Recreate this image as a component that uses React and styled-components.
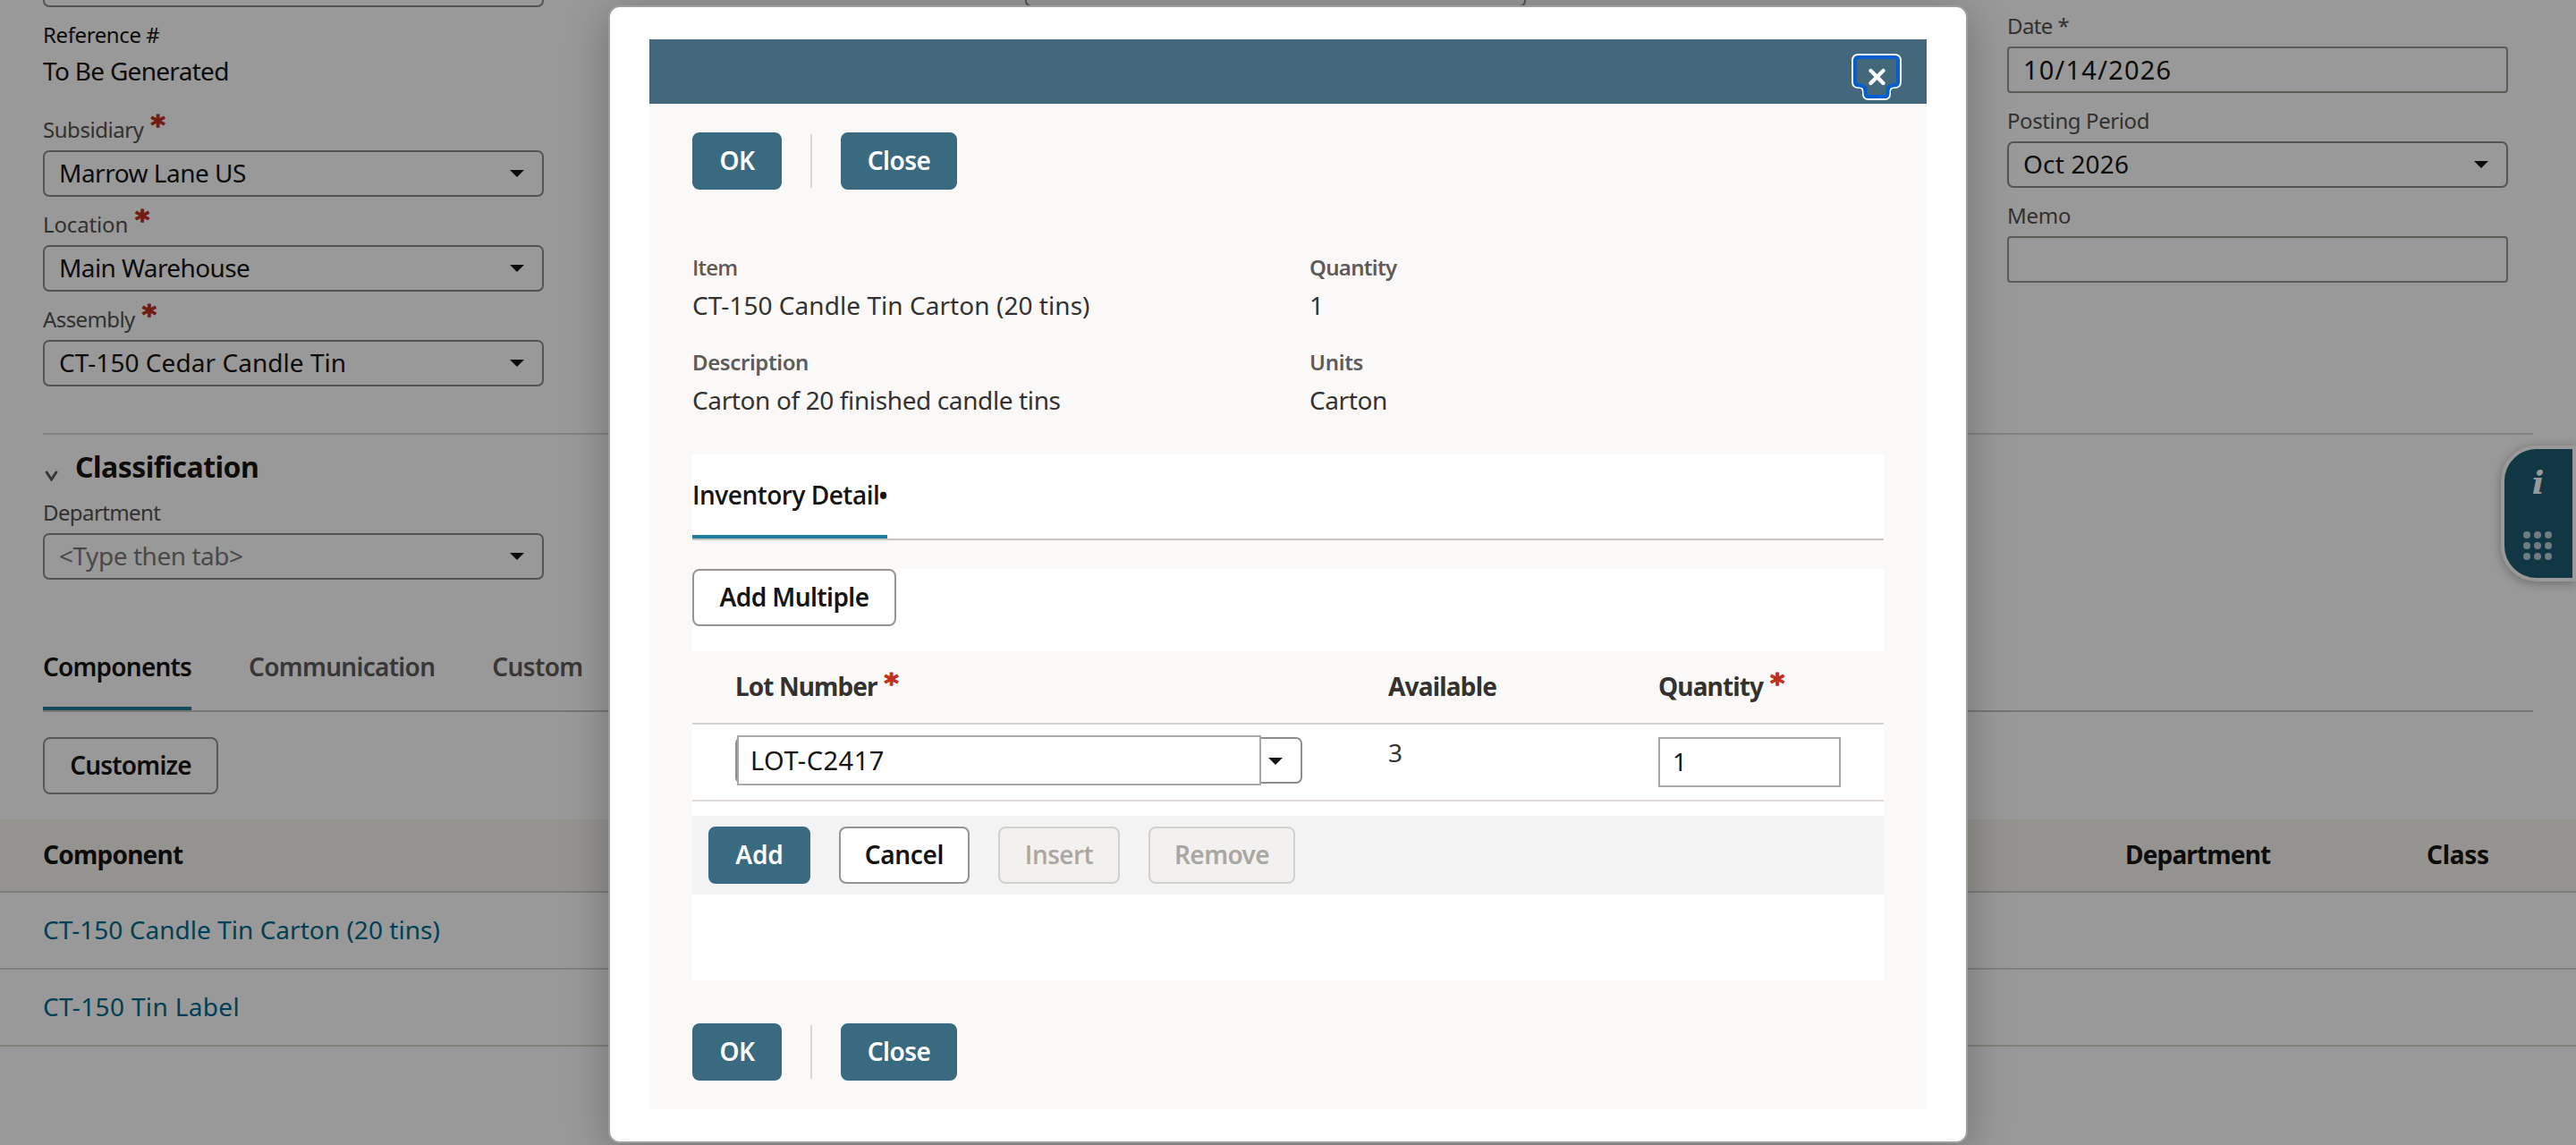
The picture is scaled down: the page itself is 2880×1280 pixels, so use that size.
import React from 'react';
import styled, { createGlobalStyle, css } from 'styled-components';

const GlobalStyle = createGlobalStyle`
  * { box-sizing: border-box; }
  html, body { margin: 0; padding: 0; background: #fff; }
  body {
    font-family: 'Noto Sans', 'Open Sans', sans-serif;
    font-size: 28px;
    color: #161513;
    overflow: hidden;
  }
  button { font-family: inherit; margin: 0; }
`;

/* ---------- shared text ---------- */

const Txt = styled.span`
  letter-spacing: ${(p) => p.$ls ?? 0}px;
  white-space: pre;
  ${(p) => p.$size && css`font-size: ${p.$size}px;`}
  ${(p) => p.$open && css`font-family: 'Open Sans', sans-serif;`}
`;

const Star = styled.span`
  font: 700 31px/32px 'DejaVu Sans', sans-serif;
  color: #c0301f;
  -webkit-text-stroke: 1.2px #c0301f;
  align-self: flex-start;
  margin: ${(p) => p.$top ?? 9}px 0 0 8px;
`;

/* ---------- page ---------- */

const Screen = styled.div`
  position: relative;
  width: 2880px;
  height: 1280px;
  overflow: hidden;
  background: #fff;
`;

const FormGrid = styled.section`
  display: grid;
  grid-template-columns: repeat(3, 560px);
  column-gap: 538px;
  height: 484px;
  padding-left: 48px;
  align-items: start;
`;

const FormColumn = styled.div`
  display: flex;
  flex-direction: column;
  margin-top: ${(p) => p.$top}px;
`;

const Label = styled.div`
  display: flex;
  align-items: flex-end;
  height: 54px;
  padding-bottom: 6px;
  font-size: 24px;
  line-height: 34px;
  color: #55534e;
`;

const StaticLabel = styled.div`
  margin-top: 14px;
  font-size: 24px;
  line-height: 34px;
`;

const StaticValue = styled.div`
  margin: 4px 0 16px;
  line-height: 38px;
`;

const Control = styled.div`
  display: flex;
  align-items: center;
  justify-content: space-between;
  height: 52px;
  padding: 0 20px 2px 16px;
  border: 2px solid ${(p) => (p.$input ? '#99988f' : '#8d8d8d')};
  border-radius: ${(p) => (p.$input ? 4 : 7)}px;
  color: ${(p) => (p.$muted ? '#7b7b7b' : '#161513')};
`;

const CaretIcon = styled.svg`
  width: 16px;
  height: 8px;
  flex: none;
  margin-top: 2px;
`;

const Caret = () => (
  <CaretIcon viewBox="0 0 16 8">
    <path d="M0 0h16L8 8z" fill="#161513" />
  </CaretIcon>
);

const Classification = styled.section`
  width: 2784px;
  margin-left: 48px;
  padding-top: 14px;
  border-top: 2px solid #dfd6d0;
`;

const SectionTitle = styled.h2`
  display: flex;
  align-items: center;
  gap: 19px;
  height: 42px;
  margin: 0;
  padding: 2px 0 0 2px;
  font-size: 32px;
  line-height: 42px;
  font-weight: 700;
`;

const Chevron = styled.svg`
  width: 15px;
  height: 12px;
  margin-top: 20px;
`;

const DepartmentField = styled.div`
  width: 560px;
`;

const TabBar = styled.nav`
  display: flex;
  gap: 64px;
  width: ${(p) => p.$w}px;
  margin: ${(p) => p.$m};
  border-bottom: 2px solid #c8c5bf;
`;

const Tab = styled.div`
  display: flex;
  align-items: center;
  height: ${(p) => p.$h}px;
  padding-top: ${(p) => p.$pt ?? 0}px;
  border-bottom: 4px solid ${(p) => (p.$active ? '#227e9e' : 'transparent')};
  font-weight: 600;
  color: ${(p) => (p.$active ? '#161513' : '#5f5d5a')};
`;

const Toolbar = styled.div`
  margin: 28px 0 28px 48px;
`;

const variants = {
  primary: css`background: #3a6a80; border-color: #3a6a80; color: #fff;`,
  plain: css`background: #fff; border-color: #97938e; color: #161513;`,
  disabled: css`background: #f3f1f0; border-color: #d4d0cb; color: #a9a7a1;`,
};

const Button = styled.button`
  display: flex;
  align-items: center;
  justify-content: center;
  width: ${(p) => p.$w}px;
  height: 64px;
  padding: 0 0 2px;
  border: 2px solid;
  border-radius: 8px;
  font-size: 28px;
  font-weight: 600;
  ${(p) => variants[p.$variant ?? 'plain']}
`;

const ComponentTable = styled.div`
  display: flex;
  flex-direction: column;
`;

const Row = styled.div`
  display: grid;
  grid-template-columns: 2328px 337px 1fr;
  align-items: center;
  height: ${(p) => (p.$head ? 82 : 86)}px;
  padding: 0 0 2px 48px;
  border-bottom: 2px solid ${(p) => (p.$head ? '#cfcdc6' : '#d5d4ca')};
  background: ${(p) => (p.$head ? '#f9f6f1' : 'transparent')};
  font-weight: ${(p) => (p.$head ? 700 : 400)};
  color: ${(p) => (p.$head ? '#161513' : '#006c90')};
`;

/* ---------- side dock ---------- */

const Dock = styled.aside`
  position: absolute;
  top: 498px;
  right: 0;
  display: flex;
  flex-direction: column;
  align-items: center;
  width: 84px;
  height: 152px;
  padding-top: 18px;
  border: 4px solid #fff;
  border-radius: 40px 0 0 40px;
  background: #1b5d71;
  box-shadow: 0 2px 12px rgba(0, 0, 0, 0.3);
`;

const InfoGlyph = styled.span`
  height: 38px;
  margin-left: -1px;
  font: italic 700 36px/38px 'DejaVu Serif', serif;
  color: #fff;
`;

const DotGrid = styled.div`
  display: grid;
  grid-template-columns: repeat(3, 8px);
  gap: 4px;
  margin: 36px 2px 0 0;
`;

const Dot = styled.i`
  height: 8px;
  border-radius: 50%;
  background: #bbced4;
`;

/* ---------- modal ---------- */

const Overlay = styled.div`
  position: absolute;
  inset: 0;
  display: flex;
  justify-content: center;
  align-items: flex-start;
  padding-top: 6px;
  background: rgba(0, 0, 0, 0.4);
`;

const Dialog = styled.div`
  width: 1520px;
  height: 1272px;
  padding: 36px 44px;
  border: 2px solid #9e9e9e;
  border-radius: 13px;
  background: #fff;
  box-shadow: 0 8px 48px rgba(0, 0, 0, 0.27);
`;

const TitleBar = styled.header`
  display: flex;
  justify-content: flex-end;
  height: 72px;
  padding: 16px 28px 0 0;
  background: #43687b;
`;

const CloseIcon = styled.svg`
  width: 56px;
  height: 52px;
`;

const Body = styled.div`
  display: flex;
  flex-direction: column;
  height: 1124px;
  padding: 32px 48px;
  background: #faf9f7;
`;

const Actions = styled.div`
  display: flex;
  align-items: center;
  gap: 32px;
`;

const Divider = styled.i`
  width: 2px;
  height: 60px;
  background: #d8d7d3;
`;

const Facts = styled.dl`
  display: grid;
  grid-template-columns: 690px 1fr;
  row-gap: 28px;
  margin: 70px 0 42px;
`;

const Fact = styled.div`
  min-width: 0;
`;

const Term = styled.dt`
  font-size: 24px;
  font-weight: 600;
  line-height: 34px;
  color: #5e5c5a;
`;

const Desc = styled.dd`
  margin: 6px 0 0;
  line-height: 38px;
  color: #333231;
`;

const TabPanelHead = styled.div`
  height: 96px;
  background: #fff;
`;

const Bullet = styled.span`
  width: 10px;
  margin-left: -1px;
`;

const Panel = styled.div`
  height: 460px;
  margin: 32px 0 48px;
  background: #fff;
`;

const LotGrid = styled.div`
  display: grid;
  grid-template-columns: 730px 302px 1fr;
  padding-left: 48px;
`;

const LotHead = styled(LotGrid)`
  height: 82px;
  margin-top: 28px;
  background: #fbfaf8;
  border-bottom: 2px solid #d6d4d0;
  font-weight: 700;
  color: #333231;
`;

const HeadCell = styled.div`
  display: flex;
  line-height: 78px;
`;

const LotRow = styled(LotGrid)`
  height: 86px;
  border-bottom: 2px solid #dfdad6;
  align-items: start;
`;

const Combo = styled.div`
  display: flex;
  width: 634px;
  height: 52px;
  margin-top: 14px;
  border: 2px solid #8d8d8d;
  border-radius: 7px;
`;

const ComboInput = styled.div`
  display: flex;
  align-items: center;
  width: 586px;
  height: 56px;
  margin-top: -4px;
  padding: 0 0 2px 13px;
  border: 2px solid #a9a9a9;
  background: #fff;
`;

const ComboArrow = styled.div`
  display: flex;
  align-items: center;
  padding-left: 8px;
`;

const Available = styled.div`
  margin-top: 12px;
  line-height: 38px;
  color: #333231;
`;

const QtyInput = styled.div`
  display: flex;
  align-items: center;
  width: 204px;
  height: 56px;
  margin-top: 14px;
  padding: 0 0 2px 14px;
  border: 2px solid #a9a9a9;
`;

const RowActions = styled.div`
  display: flex;
  gap: 32px;
  margin-top: 16px;
  padding: 12px 18px;
  background: #f3f3f3;
`;

/* ---------- pieces ---------- */

function Field({ label, ls, required, children }) {
  return (
    <>
      <Label>
        <Txt $ls={ls}>{label}</Txt>
        {required && <Star>*</Star>}
      </Label>
      {children}
    </>
  );
}

function Select({ value, ls, muted }) {
  return (
    <Control $muted={muted}>
      <Txt $ls={ls}>{value}</Txt>
      <Caret />
    </Control>
  );
}

function FormActions() {
  return (
    <Actions>
      <Button $variant="primary" $w={100}><Txt $ls={-0.6}>OK</Txt></Button>
      <Divider />
      <Button $variant="primary" $w={130}><Txt $ls={-0.5}>Close</Txt></Button>
    </Actions>
  );
}

export default function App() {
  return (
    <Screen>
      <GlobalStyle />
      <FormGrid>
        <FormColumn $top={-44}>
          <Control />
          <StaticLabel><Txt $ls={-0.4}>Reference #</Txt></StaticLabel>
          <StaticValue><Txt $ls={-0.7}>To Be Generated</Txt></StaticValue>
          <Field label="Subsidiary" ls={-0.45} required>
            <Select value="Marrow Lane US" ls={-0.5} />
          </Field>
          <Field label="Location" ls={-0.15} required>
            <Select value="Main Warehouse" ls={-0.6} />
          </Field>
          <Field label="Assembly" ls={-0.6} required>
            <Select value="CT-150 Cedar Candle Tin" ls={0.05} />
          </Field>
        </FormColumn>
        <FormColumn $top={-44}>
          <Control />
        </FormColumn>
        <FormColumn $top={-2}>
          <Field label="Date *" ls={-0.6}>
            <Control $input><Txt $size={29} $ls={1.2}>10/14/2026</Txt></Control>
          </Field>
          <Field label="Posting Period" ls={-0.4}>
            <Select value="Oct 2026" ls={0.18} />
          </Field>
          <Field label="Memo" ls={-0.25}>
            <Control $input />
          </Field>
        </FormColumn>
      </FormGrid>

      <Classification>
        <SectionTitle>
          <Chevron viewBox="0 0 15 12">
            <path d="M1.5 1l6 9 6-9" fill="none" stroke="#5c5b59" strokeWidth="3" />
          </Chevron>
          <Txt $ls={-0.54}>Classification</Txt>
        </SectionTitle>
        <DepartmentField>
          <Field label="Department" ls={-0.6}>
            <Select value="<Type then tab>" ls={-0.45} muted />
          </Field>
        </DepartmentField>
      </Classification>

      <TabBar $w={2784} $m="48px 0 0 48px">
        <Tab $h={98} $pt={4} $active><Txt $ls={-0.8}>Components</Txt></Tab>
        <Tab $h={98} $pt={4}><Txt $ls={-0.71}>Communication</Txt></Tab>
        <Tab $h={98} $pt={4}><Txt $ls={-0.64}>Custom</Txt></Tab>
      </TabBar>

      <Toolbar>
        <Button $w={196}><Txt $ls={-0.8}>Customize</Txt></Button>
      </Toolbar>

      <ComponentTable>
        <Row $head>
          <Txt $ls={-0.76}>Component</Txt>
          <Txt $ls={-0.84}>Department</Txt>
          <Txt $ls={-0.29}>Class</Txt>
        </Row>
        <Row><Txt $ls={0.03}>CT-150 Candle Tin Carton (20 tins)</Txt></Row>
        <Row><Txt $ls={0.35}>CT-150 Tin Label</Txt></Row>
      </ComponentTable>

      <Dock>
        <InfoGlyph>i</InfoGlyph>
        <DotGrid>
          {Array.from({ length: 9 }, (_, i) => <Dot key={i} />)}
        </DotGrid>
      </Dock>

      <Overlay>
        <Dialog>
          <TitleBar>
            <CloseIcon viewBox="0 0 56 52">
              <path
                d="M8 1H48Q55 1 55 8V31Q55 38 48 38H47Q43 38 43 43V45Q43 51 37 51H19Q13 51 13 45V43Q13 38 9 38H8Q1 38 1 31V8Q1 1 8 1Z"
                fill="none"
                stroke="#fff"
                strokeWidth="2"
              />
              <path
                d="M8 4H48Q52 4 52 8V31Q52 35.5 48 35.5H46Q40.5 36 40.5 42V44Q40.5 48 36.5 48H19.5Q15.5 48 15.5 44V42Q15.5 36 10 35.5H8Q4 35.5 4 31V8Q4 4 8 4Z"
                fill="none"
                stroke="#0560cf"
                strokeWidth="4"
              />
              <path d="M21.5 19l14 14M35.500 19l-14 14" stroke="#fff" strokeWidth="4.4" strokeLinecap="round" />
            </CloseIcon>
          </TitleBar>
          <Body>
            <FormActions />
            <Facts>
              <Fact>
                <Term><Txt $open $ls={-0.8}>Item</Txt></Term>
                <Desc><Txt $ls={0.05}>CT-150 Candle Tin Carton (20 tins)</Txt></Desc>
              </Fact>
              <Fact>
                <Term><Txt $ls={-0.7}>Quantity</Txt></Term>
                <Desc>1</Desc>
              </Fact>
              <Fact>
                <Term><Txt $ls={-0.4}>Description</Txt></Term>
                <Desc><Txt $ls={-0.38}>Carton of 20 finished candle tins</Txt></Desc>
              </Fact>
              <Fact>
                <Term><Txt $ls={-0.3}>Units</Txt></Term>
                <Desc><Txt $ls={-0.4}>Carton</Txt></Desc>
              </Fact>
            </Facts>

            <TabPanelHead>
              <TabBar $w={1332} $m="0">
                <Tab $h={94} $active>
                  <Txt $open $ls={-0.5}>Inventory Detail</Txt>
                  <Bullet>•</Bullet>
                </Tab>
              </TabBar>
            </TabPanelHead>

            <Panel>
              <Button $w={228}><Txt $ls={-0.6}>Add Multiple</Txt></Button>
              <LotHead>
                <HeadCell><Txt $ls={-0.92}>Lot Number</Txt><Star $top={19}>*</Star></HeadCell>
                <HeadCell><Txt $ls={-0.8}>Available</Txt></HeadCell>
                <HeadCell><Txt $ls={-0.86}>Quantity</Txt><Star $top={19}>*</Star></HeadCell>
              </LotHead>
              <LotRow>
                <Combo>
                  <ComboInput><Txt $size={29} $ls={0.5}>LOT-C2417</Txt></ComboInput>
                  <ComboArrow><Caret /></ComboArrow>
                </Combo>
                <Available>3</Available>
                <QtyInput>1</QtyInput>
              </LotRow>
              <RowActions>
                <Button $variant="primary" $w={114}><Txt $ls={-0.2}>Add</Txt></Button>
                <Button $w={146}><Txt $ls={-0.35}>Cancel</Txt></Button>
                <Button $variant="disabled" $w={136}><Txt $open $ls={-0.5}>Insert</Txt></Button>
                <Button $variant="disabled" $w={164}><Txt $ls={-0.6}>Remove</Txt></Button>
              </RowActions>
            </Panel>
            <FormActions />
          </Body>
        </Dialog>
      </Overlay>
    </Screen>
  );
}
